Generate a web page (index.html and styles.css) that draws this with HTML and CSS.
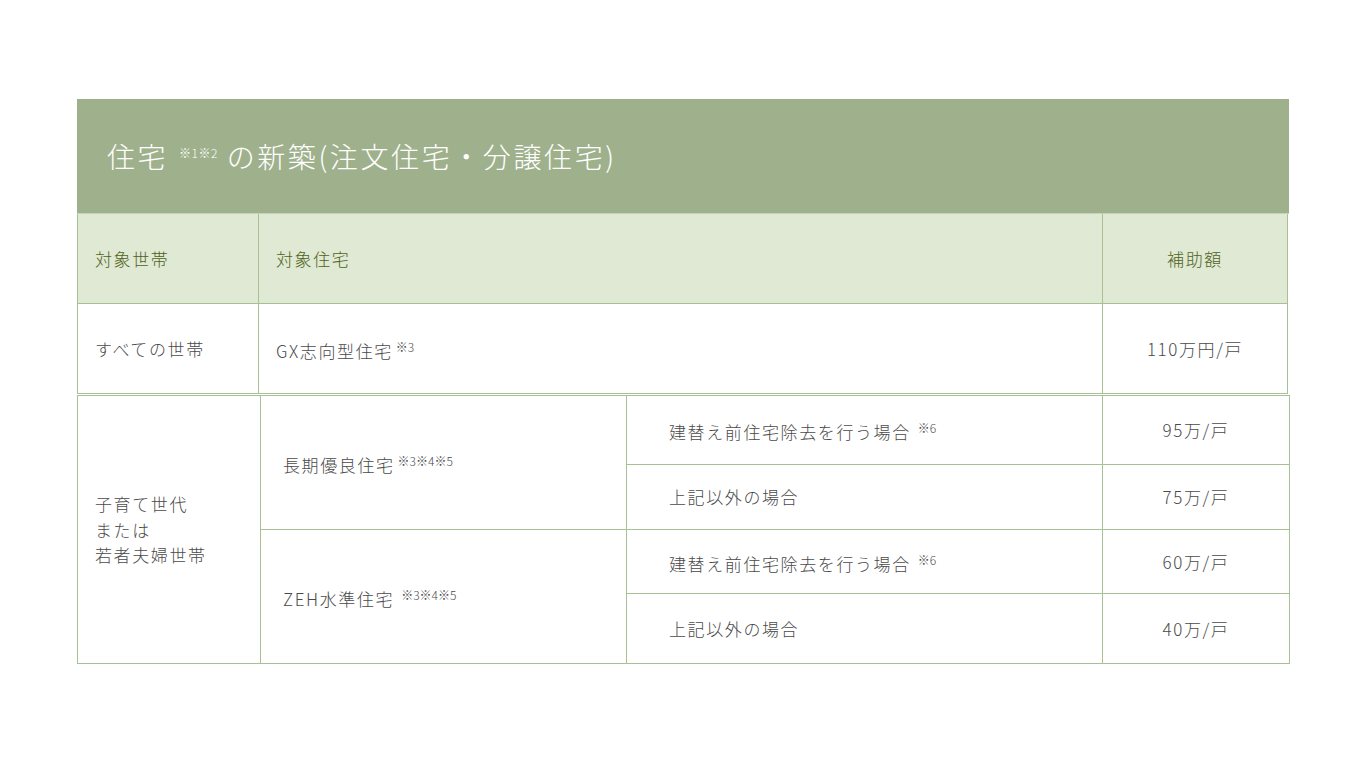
FILE: index.html
```html
<!DOCTYPE html>
<html lang="ja">
<head>
<meta charset="utf-8">
<link rel="stylesheet" href="styles.css">
</head>
<body>
<div class="wrap">
  <div class="band">
    <h1 class="title">住宅 <span class="tsup">※1※2</span> の新築(注文住宅・分譲住宅)</h1>
  </div>
  <table class="t1">
    <colgroup><col class="c1"><col class="c2"><col class="c3"></colgroup>
    <tr class="head">
      <td>対象世帯</td>
      <td>対象住宅</td>
      <td class="center">補助額</td>
    </tr>
    <tr class="row">
      <td>すべての世帯</td>
      <td>GX志向型住宅<span class="sup">※3</span></td>
      <td class="center">110万円/戸</td>
    </tr>
  </table>
  <table class="t2">
    <colgroup><col class="d1"><col class="d2"><col class="d3"><col class="d4"></colgroup>
    <tr class="r1">
      <td rowspan="4" class="who">子育て世代<br>または<br>若者夫婦世帯</td>
      <td rowspan="2" class="kind">長期優良住宅<span class="sup">※3※4※5</span></td>
      <td class="case">建替え前住宅除去を行う場合<span class="sup wide">※6</span></td>
      <td class="center">95万/戸</td>
    </tr>
    <tr class="r2">
      <td class="case">上記以外の場合</td>
      <td class="center">75万/戸</td>
    </tr>
    <tr class="r3">
      <td rowspan="2" class="kind">ZEH水準住宅<span class="sup wide">※3※4※5</span></td>
      <td class="case">建替え前住宅除去を行う場合<span class="sup wide">※6</span></td>
      <td class="center">60万/戸</td>
    </tr>
    <tr class="r4">
      <td class="case">上記以外の場合</td>
      <td class="center">40万/戸</td>
    </tr>
  </table>
</div>
</body>
</html>
```

FILE: styles.css
```css
html, body {
  margin: 0;
  padding: 0;
  background: #ffffff;
}
body {
  font-family: "Noto Sans CJK JP", "Noto Sans", sans-serif;
  color: #4a4a4a;
}
.wrap {
  margin: 99px 0 0 77px;
  width: 1212px;
}
.band {
  background: #9fb18c;
  height: 115px;
  border-bottom: 1px solid #c6d4b6;
  display: flex;
  align-items: center;
  padding-left: 30px;
  box-sizing: border-box;
}
.title {
  margin: 0;
  color: #ffffff;
  font-size: 28px;
  font-weight: 300;
  letter-spacing: 2.6px;
  line-height: 1;
}
.tsup {
  font-size: 12px;
  letter-spacing: 0.5px;
  vertical-align: 10px;
  margin: 0 0 0 2px;
}
table {
  border-collapse: collapse;
  table-layout: fixed;
  font-size: 17px;
  letter-spacing: 1.6px;
  font-weight: 300;
}
td {
  border: 1px solid #a9bf94;
  padding: 0 0 0 17px;
  vertical-align: middle;
  line-height: 25.5px;
}
.center {
  text-align: center;
  padding: 0;
}
.t1 {
  width: 1210px;
}
.t1 .c1 { width: 181px; }
.t1 .c2 { width: 844px; }
.t1 .c3 { width: 185px; }
.t1 tr.head td {
  background: #dfe9d3;
  color: #4f6220;
  height: 89px;
  border-top: none;
}
.t1 tr.row td {
  height: 89px;
}
.t2 {
  width: 1212px;
  margin-top: 1px;
}
.t2 .d1 { width: 183px; }
.t2 .d2 { width: 366px; }
.t2 .d3 { width: 476px; }
.t2 .d4 { width: 187px; }
.t2 .kind {
  padding-left: 22px;
}
.t2 .case {
  padding-left: 42px;
}
.t2 .r1 td { height: 68px; }
.t2 .r2 td { height: 64px; }
.t2 .r3 td { height: 63px; }
.t2 .r4 td { height: 69px; }
.sup {
  font-size: 12px;
  letter-spacing: 0;
  vertical-align: 6px;
  margin-left: 3px;
}
.sup.wide {
  margin-left: 7px;
}
```
